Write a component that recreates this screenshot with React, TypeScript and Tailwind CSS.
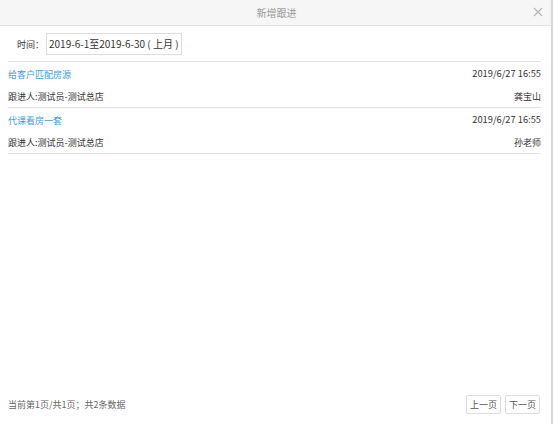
import React from "react";

const font = { fontFamily: '"Noto Sans CJK SC", "Noto Sans", sans-serif' };

function Item({ title, time, person, name }: { title: string; time: string; person: string; name: string }) {
  return (
    <div className="border-b border-[#e3e3e3]">
      <div className="flex justify-between items-center h-[23px] pt-[1px]">
        <span className="text-[#3a9ce8]">{title}</span>
        <span className="text-[#333] text-[9.3px]">{time}</span>
      </div>
      <div className="flex justify-between items-center h-[22px]">
        <span className="text-[#333]">{person}</span>
        <span className="text-[#333]">{name}</span>
      </div>
    </div>
  );
}

export default function App() {
  return (
    <div className="w-[554px] h-[424px] bg-white flex text-[9px] leading-none" style={font}>
      <div className="w-[551px] h-full flex flex-col">
        <div className="h-[26px] bg-[#f6f6f6] border-b border-[#e2e2e2] flex items-center relative shrink-0">
          <div className="flex-1 text-center text-[#999] text-[10px] pl-[2px]">新增跟进</div>
          <svg className="absolute right-[8px] top-[7px]" width="10" height="10" viewBox="0 0 10 10">
            <path d="M1 1L9 9M9 1L1 9" stroke="#b5b5b5" strokeWidth="1.1" />
          </svg>
        </div>
        <div className="px-[8px] flex-1 flex flex-col">
          <div className="flex items-center pt-[7px] pb-[6px] pl-[9px]">
            <span className="text-[#333]">时间：</span>
            <div className="ml-[2px] h-[22px] border border-[#dcdcdc] flex items-center px-[2px] text-[#333] text-[10px] whitespace-nowrap">
              2019-6-1至2019-6-30 ( 上月 )
            </div>
          </div>
          <div className="border-t border-[#e3e3e3] mr-[2px]">
            <Item title="给客户匹配房源" time="2019/6/27 16:55" person="跟进人:测试员-测试总店" name="龚宝山" />
            <Item title="代课看房一套" time="2019/6/27 16:55" person="跟进人:测试员-测试总店" name="孙老师" />
          </div>
          <div className="flex-1" />
          <div className="flex items-center justify-between h-[22px] mb-[9px] mr-[3px]">
            <span className="text-[#666]">当前第1页/共1页；共2条数据</span>
            <div className="flex gap-[4px]">
              <button className="h-[19px] w-[35px] border border-[#ddd] rounded-[2px] text-[#555] text-[9px] bg-white">上一页</button>
              <button className="h-[19px] w-[35px] border border-[#ddd] rounded-[2px] text-[#555] text-[9px] bg-white">下一页</button>
            </div>
          </div>
        </div>
      </div>
      <div className="w-[2px] h-full bg-[#d6d6d6]" />
      <div className="w-[1px] h-full bg-white" />
    </div>
  );
}
